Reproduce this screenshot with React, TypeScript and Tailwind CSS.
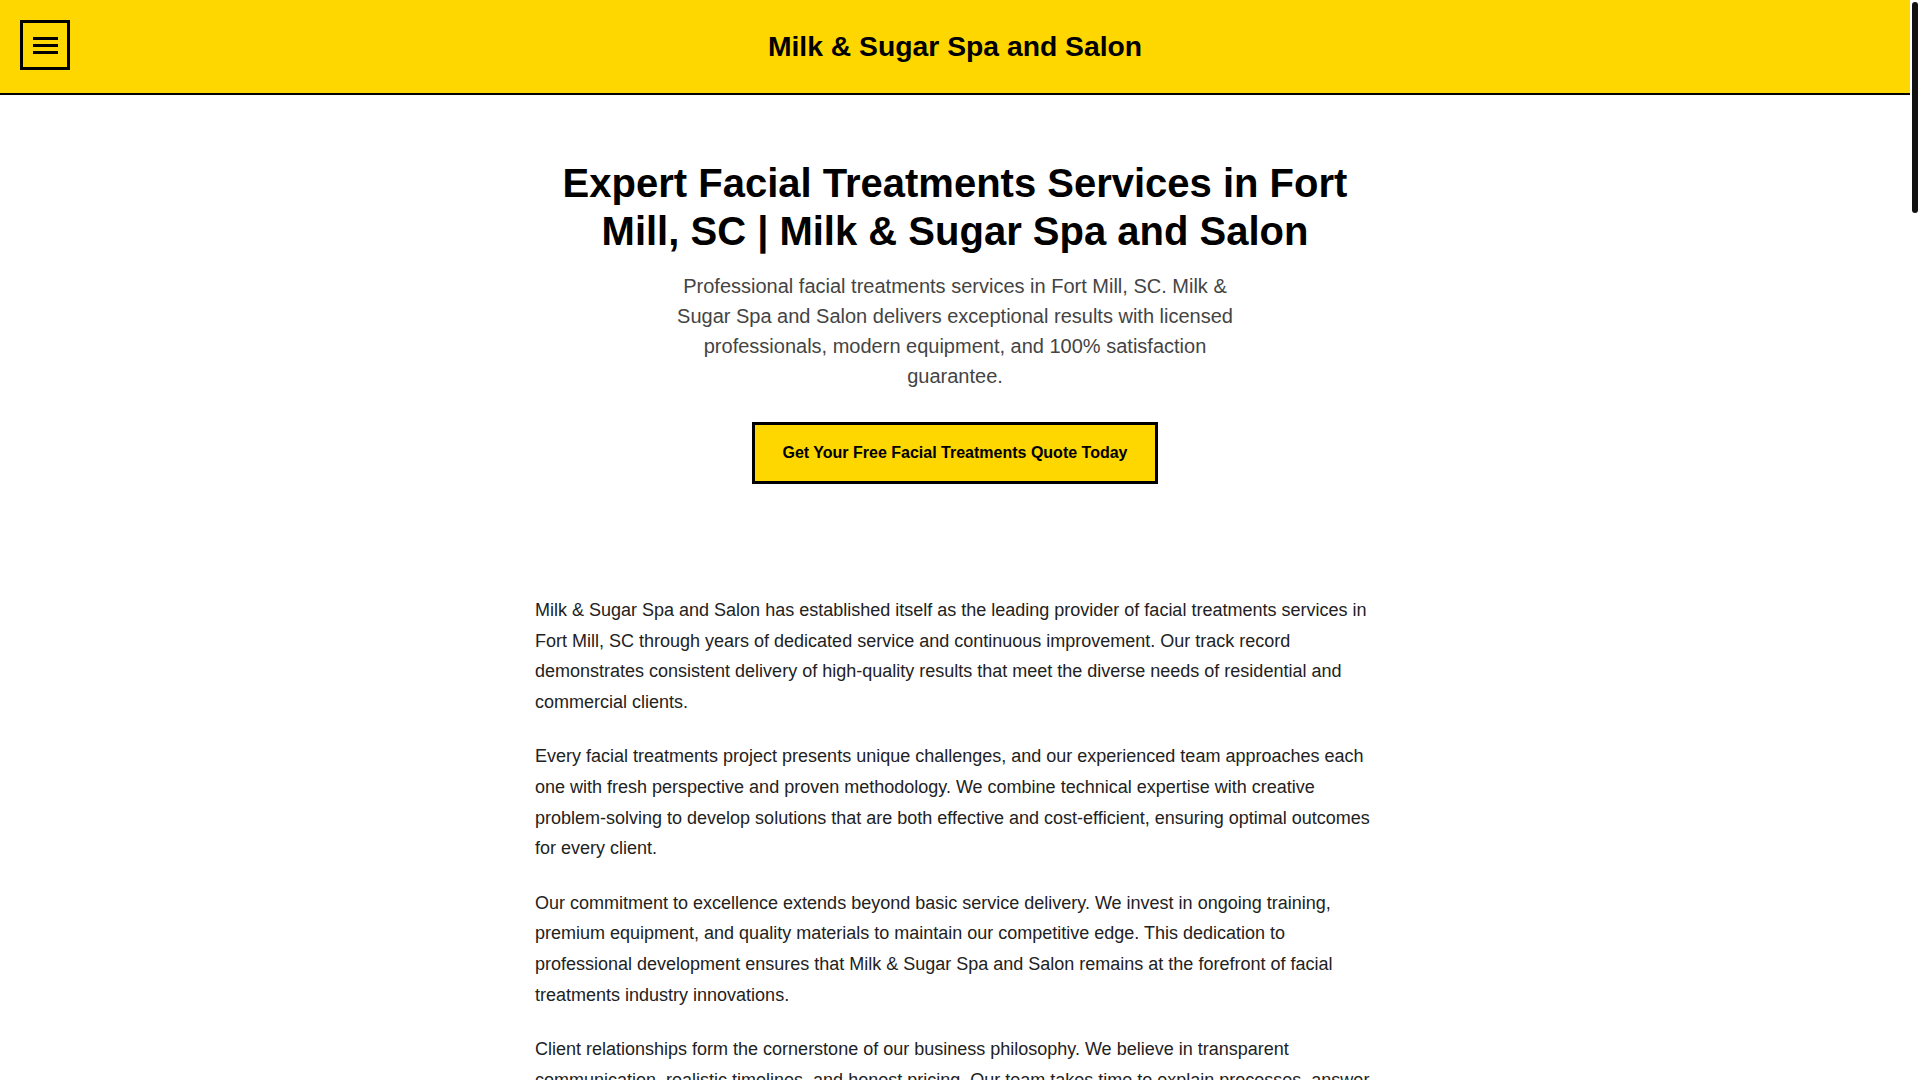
import React from "react";

const BRAND = "Milk & Sugar Spa and Salon";

const INTRO = [
  "Milk & Sugar Spa and Salon has established itself as the leading provider of facial treatments services in Fort Mill, SC through years of dedicated service and continuous improvement. Our track record demonstrates consistent delivery of high-quality results that meet the diverse needs of residential and commercial clients.",
  "Every facial treatments project presents unique challenges, and our experienced team approaches each one with fresh perspective and proven methodology. We combine technical expertise with creative problem-solving to develop solutions that are both effective and cost-efficient, ensuring optimal outcomes for every client.",
  "Our commitment to excellence extends beyond basic service delivery. We invest in ongoing training, premium equipment, and quality materials to maintain our competitive edge. This dedication to professional development ensures that Milk & Sugar Spa and Salon remains at the forefront of facial treatments industry innovations.",
  "Client relationships form the cornerstone of our business philosophy. We believe in transparent communication, realistic timelines, and honest pricing. Our team takes time to explain processes, answer questions, and keep you informed from the first consultation to the final result.",
];

const SECTIONS: { title: string; body: string[] }[] = [
  {
    title: "Why Choose Milk & Sugar Spa and Salon",
    body: [
      "Choosing the right facial treatments provider in Fort Mill, SC makes all the difference. Our licensed professionals bring years of hands-on experience, and every treatment is tailored to your skin type, goals, and schedule.",
      "We use modern equipment and premium products from trusted brands, and we stand behind our work with a 100% satisfaction guarantee. If something is not right, we will make it right.",
      "From your first visit, you can expect a calm, welcoming environment, punctual appointments, and clear recommendations for caring for your skin at home between visits.",
    ],
  },
  {
    title: "Our Facial Treatments Process",
    body: [
      "Every service begins with a consultation. We discuss your concerns, review your skin history, and recommend the treatment plan that fits your needs and budget.",
      "During the treatment, our team works carefully and explains each step, so you always know what is happening and why. Afterward, we share aftercare tips and suggest a follow-up schedule.",
      "We keep detailed notes after every visit, which lets us track your progress over time and adjust your plan as your skin changes with the seasons.",
    ],
  },
  {
    title: "Serving Fort Mill, SC and Surrounding Areas",
    body: [
      "Milk & Sugar Spa and Salon proudly serves clients throughout Fort Mill, Tega Cay, Rock Hill, Indian Land, and the greater Charlotte area. Our convenient location and flexible hours make it easy to fit self-care into a busy week.",
      "Whether you are preparing for a special event or building a long-term skincare routine, our team is ready to help you look and feel your best.",
    ],
  },
  {
    title: "Frequently Asked Questions",
    body: [
      "How long does a facial treatment take? Most treatments take between 45 and 90 minutes, depending on the service you choose and the needs of your skin.",
      "How often should I schedule a facial? Many clients benefit from a treatment every four to six weeks, which matches the natural renewal cycle of the skin.",
      "Is there any downtime? Most of our facial treatments require little to no downtime. We will let you know in advance if a specific service needs extra recovery time.",
      "Do you offer gift cards? Yes. Gift cards are available for any amount and can be used toward all services and retail products.",
    ],
  },
  {
    title: "Get Started Today",
    body: [
      "Ready to experience the difference professional care can make? Contact Milk & Sugar Spa and Salon today to request your free facial treatments quote and schedule your first appointment in Fort Mill, SC.",
    ],
  },
];

function MenuButton() {
  return (
    <button
      type="button"
      aria-label="Open menu"
      className="flex h-[50px] w-[50px] flex-col items-center justify-center gap-[4px] border-[3px] border-black bg-transparent"
    >
      <span className="block h-[3px] w-[25px] bg-black" />
      <span className="block h-[3px] w-[25px] bg-black" />
      <span className="block h-[3px] w-[25px] bg-black" />
    </button>
  );
}

// page scroll position indicator drawn beside the content column
function ScrollRail() {
  return (
    <div className="flex w-[10px] shrink-0 flex-col bg-white px-[2px] pt-[2px]">
      <div className="h-[211px] w-[6px] rounded-full bg-[#111]" />
    </div>
  );
}

export default function App() {
  return (
    <div className="flex h-screen bg-white text-[#222] font-['Liberation_Sans',Arial,sans-serif]">
      <div className="min-w-0 flex-1 overflow-y-auto [scrollbar-width:none] [&::-webkit-scrollbar]:hidden">
        <header className="sticky top-0 z-10 grid h-[95px] grid-cols-[1fr_auto_1fr] items-center border-b-2 border-black bg-[#FFD700] px-5 pb-[3px]">
          <div className="flex items-center">
            <MenuButton />
          </div>
          <div className="mt-[2px] text-[28.3px] font-bold leading-none text-black">{BRAND}</div>
          <div />
        </header>

        <main className="flex min-h-[5330px] flex-col">
          <section className="flex flex-col items-center px-5 pt-[64px] text-center">
            <h1 className="max-w-[800px] text-[40px] font-bold leading-[1.2] text-black">
              Expert Facial Treatments Services in Fort Mill, SC | {BRAND}
            </h1>
            <p className="mt-4 max-w-[600px] text-[20px] leading-[1.5] text-[#444]">
              Professional facial treatments services in Fort Mill, SC. {BRAND} delivers exceptional results with
              licensed professionals, modern equipment, and 100% satisfaction guarantee.
            </p>
            <a
              href="#quote"
              className="mt-[31px] border-[3px] border-black bg-[#FFD700] px-7 py-4 text-[16px] font-bold leading-[24px] text-black"
            >
              Get Your Free Facial Treatments Quote Today
            </a>
          </section>

          <section className="mx-auto mt-[111px] w-full max-w-[840px] text-[18px] leading-[1.7]">
            {INTRO.map((p, i) => (
              <p key={i} className="mb-6">
                {p}
              </p>
            ))}

            {SECTIONS.map((s) => (
              <div key={s.title} className="mt-14">
                <h2 className="mb-5 text-[30px] font-bold leading-[1.25] text-black">{s.title}</h2>
                {s.body.map((p, i) => (
                  <p key={i} className="mb-6">
                    {p}
                  </p>
                ))}
              </div>
            ))}

            <div id="quote" className="mt-10 flex justify-center">
              <a
                href="#quote"
                className="border-[3px] border-black bg-[#FFD700] px-7 py-4 text-[16px] font-bold leading-[24px] text-black"
              >
                Get Your Free Facial Treatments Quote Today
              </a>
            </div>
          </section>

          <footer className="mt-auto border-t-2 border-black bg-[#FFD700] px-5 py-10 text-center text-[16px] text-black">
            <div className="text-[22px] font-bold">{BRAND}</div>
            <div className="mt-2">Fort Mill, SC</div>
            <div className="mt-4 text-[14px]">© 2025 {BRAND}. All rights reserved.</div>
          </footer>
        </main>
      </div>
      <ScrollRail />
    </div>
  );
}
